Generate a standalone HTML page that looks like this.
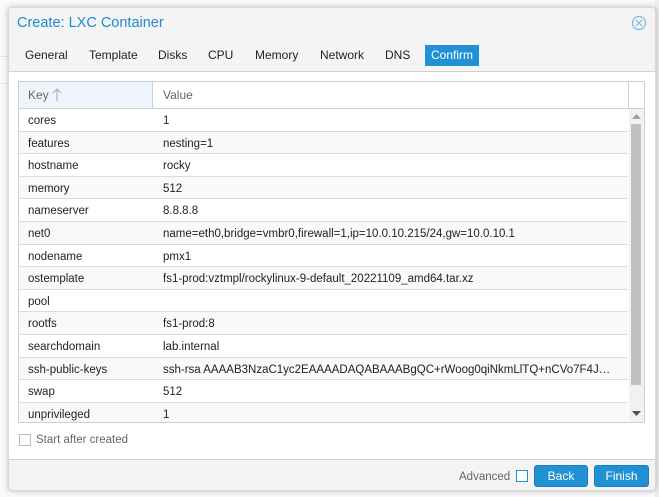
<!DOCTYPE html>
<html><head><meta charset="utf-8"><style>
*{box-sizing:border-box;margin:0;padding:0}
body{width:659px;height:497px;background:#f5f5f5;font-family:"Liberation Sans",sans-serif;font-size:12px;color:#000;position:relative;overflow:hidden}
.bg{position:absolute;left:0;top:0;width:659px;height:497px;background:#fafafa}
.bgl{position:absolute;background:#e6e6e6}
.win{position:absolute;left:8px;top:7px;width:648px;height:484px;background:#f4f4f4;border:1px solid #d8d8d8;border-radius:4px;box-shadow:0 0 6px rgba(0,0,0,.25)}
.title{position:absolute;left:8px;top:7px;font-size:14.5px;color:#1a8ccf}
.close{position:absolute;left:622px;top:7px}
.tabs{position:absolute;top:37px;left:0;height:22px}
.tab{position:absolute;top:0;height:21px;line-height:21px;font-size:12px;color:#222;padding:0 7px}
.tab.on{background:#2291d3;color:#fff;padding:0 6px}
.body{position:absolute;left:0;top:63px;width:646px;height:389px;background:#fff;border-top:1px solid #d0d0d0;border-bottom:1px solid #d0d0d0}
.grid{position:absolute;left:9px;top:9px;width:627px;height:342px;border:1px solid #cfcfcf;overflow:hidden}
.hd{position:absolute;left:0;top:0;width:625px;height:27px;border-bottom:1px solid #cfcfcf;color:#666;font-size:12px}
.hd div{position:absolute;top:0;height:26px;line-height:26px}
.row{position:absolute;left:0;width:609px;height:22.6px;border-bottom:1px solid #dcdcdc;line-height:24.5px;font-size:11.5px;color:#222}
.row.o{background:#f9f9f9}
.row span{position:absolute;left:9px}
.row b{font-weight:normal;position:absolute;left:144px;width:460px;white-space:nowrap;overflow:hidden}
.sb{position:absolute;left:610px;top:27px;width:15px;height:313px;background:#f1f1f1}
.thumb{position:absolute;left:2px;top:15px;width:10px;height:261px;background:#c1c1c1}
.foot{position:absolute;left:0;top:453px;width:646px;height:30px}
.btn{position:absolute;top:4px;height:22px;line-height:20px;background:#2291d3;border:1px solid #1c7fba;border-radius:3px;color:#fff;text-align:center;font-size:12px}
</style></head><body>
<div class="bg"></div>
<div class="bgl" style="left:0;top:56px;width:8px;height:1px"></div>
<div class="bgl" style="left:0;top:83px;width:8px;height:1px"></div>
<div class="bgl" style="left:655px;top:0;width:4px;height:497px;background:#eee"></div>
<div class="win">
 <div class="title">Create: LXC Container</div>
 <svg class="close" width="16" height="16" viewBox="0 0 16 16"><circle cx="8" cy="8" r="6.5" fill="none" stroke="#7ab8e0" stroke-width="1.2"/><path d="M5 5L11 11M11 5L5 11" stroke="#7ab8e0" stroke-width="1.2"/></svg>
 <div class="tabs">
  <div class="tab" style="left:9px">General</div>
  <div class="tab" style="left:73px">Template</div>
  <div class="tab" style="left:142px">Disks</div>
  <div class="tab" style="left:192px">CPU</div>
  <div class="tab" style="left:239px">Memory</div>
  <div class="tab" style="left:304px">Network</div>
  <div class="tab" style="left:369px">DNS</div>
  <div class="tab on" style="left:416px">Confirm</div>
 </div>
 <div class="body">
  <div class="grid">
   <div class="hd"><div style="left:0;width:134px;background:#eef4fb;border-right:1px solid #cfcfcf;padding-left:9px">Key <svg width="10" height="13" viewBox="0 0 10 13" style="vertical-align:-2px"><path d="M5 1V13M1 5L5 1L9 5" fill="none" stroke="#aaa" stroke-width="1"/></svg></div><div style="left:144px">Value</div><div style="left:609px;width:1px;height:26px;background:#cfcfcf"></div></div>
   <div class="row" style="top:27px"><span>cores</span><b>1</b></div>
   <div class="row o" style="top:49.6px"><span>features</span><b>nesting=1</b></div>
   <div class="row" style="top:72.2px"><span>hostname</span><b>rocky</b></div>
   <div class="row o" style="top:94.8px"><span>memory</span><b>512</b></div>
   <div class="row" style="top:117.4px"><span>nameserver</span><b>8.8.8.8</b></div>
   <div class="row o" style="top:140px"><span>net0</span><b>name=eth0,bridge=vmbr0,firewall=1,ip=10.0.10.215/24,gw=10.0.10.1</b></div>
   <div class="row" style="top:162.6px"><span>nodename</span><b>pmx1</b></div>
   <div class="row o" style="top:185.2px"><span>ostemplate</span><b>fs1-prod:vztmpl/rockylinux-9-default_20221109_amd64.tar.xz</b></div>
   <div class="row" style="top:207.8px"><span>pool</span><b></b></div>
   <div class="row o" style="top:230.4px"><span>rootfs</span><b>fs1-prod:8</b></div>
   <div class="row" style="top:253px"><span>searchdomain</span><b>lab.internal</b></div>
   <div class="row o" style="top:275.6px"><span>ssh-public-keys</span><b>ssh-rsa AAAAB3NzaC1yc2EAAAADAQABAAABgQC+rWoog0qiNkmLlTQ+nCVo7F4J…</b></div>
   <div class="row" style="top:298.2px"><span>swap</span><b>512</b></div>
   <div class="row o" style="top:320.8px"><span>unprivileged</span><b>1</b></div>
   <div class="sb"><svg style="position:absolute;left:3px;top:5px" width="9" height="5"><path d="M0 5L4.5 0L9 5Z" fill="#a0a0a0"/></svg><div class="thumb"></div><svg style="position:absolute;left:3px;top:302px" width="9" height="5"><path d="M0 0L4.5 5L9 0Z" fill="#505050"/></svg></div>
  </div>
  <div style="position:absolute;left:10px;top:362px;width:12px;height:12px;border:1px solid #bbb;background:#fff"></div>
  <div style="position:absolute;left:27px;top:362px;color:#666;font-size:11.5px">Start after created</div>
 </div>
 <div class="foot">
  <div style="position:absolute;left:450px;top:10px;color:#666;font-size:11.5px">Advanced</div>
  <div style="position:absolute;left:507px;top:9px;width:12px;height:12px;border:1px solid #2291d3;background:#fff"></div>
  <div class="btn" style="left:525px;width:54px">Back</div>
  <div class="btn" style="left:585px;width:55px">Finish</div>
 </div>
</div>
</body></html>
